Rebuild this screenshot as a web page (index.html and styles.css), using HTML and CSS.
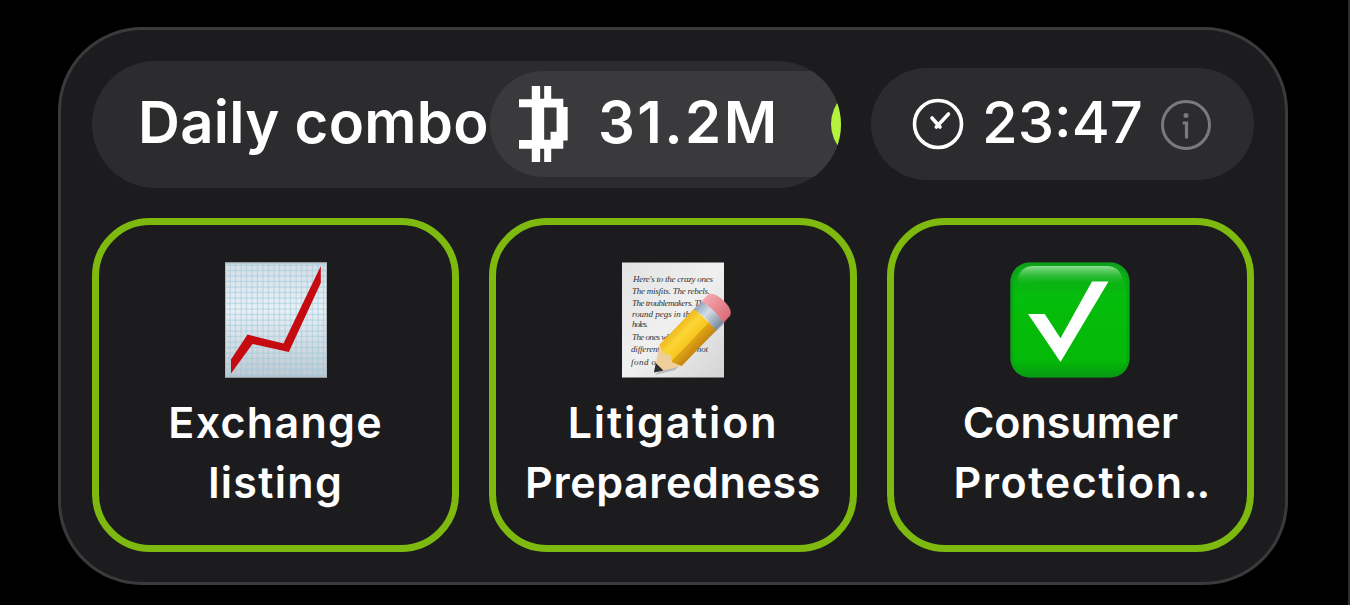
FILE: index.html
```
<!DOCTYPE html>
<html lang="en">
<head>
  <meta charset="UTF-8" />
  <meta name="viewport" content="width=device-width, initial-scale=1.0" />
  <title>Daily combo</title>
  <link rel="stylesheet" href="styles.css">
</head>
<body>
  <div class="panel">
    <div class="header">
      <div class="combo">
        <span class="combo-title">Daily combo</span>
        <div class="reward">
          <svg class="coin" viewBox="118 110 146 226" fill="#fff">
            <path fill-rule="evenodd" d="M156 110h25v38h12v-38h21v38h36v24h13v100h-13v25h-36v39h-21v-39h-12v39h-25v-39h-38v-26h38v-98h-38v-24h38zM193 174v96h19v-24h18v-72z"/>
          </svg>
          <span class="reward-value">31.2M</span>
          <span class="dot"></span>
        </div>
      </div>
      <div class="timer">
        <svg class="clock" viewBox="0 0 52 52" fill="none" stroke="#fff" stroke-linecap="round">
          <circle cx="26" cy="26" r="23.5" stroke-width="3.6"/>
          <path d="M20 20L28 29M36.500 16L24.300 29" stroke-width="3.600"/>
        </svg>
        <span class="timer-value">23:47</span>
        <svg class="info" viewBox="0 0 52 52" fill="none" stroke="#7a7a7c">
          <circle cx="26" cy="26" r="23.5" stroke-width="3"/>
          <circle cx="26" cy="16.500" r="2.500" fill="#7a7a7c" stroke="none"/>
          <path d="M22.700 24H26.500V39.500" stroke-width="3.200"/>
        </svg>
      </div>
    </div>

    <div class="cards">
      <div class="card">
        <svg class="emoji" viewBox="0 0 120 116">
          <defs>
            <linearGradient id="sheet" x1="0" y1="0" x2="0" y2="1">
              <stop offset="0" stop-color="#d5dde5"/>
              <stop offset=".4" stop-color="#eaf0f6"/>
              <stop offset="1" stop-color="#c0c9d2"/>
            </linearGradient>
            <pattern id="grid" width="5.500" height="5.500" patternUnits="userSpaceOnUse">
              <path d="M3 0V6M0 3H6" stroke="#8cc4d8" stroke-width=".8" opacity=".75"/>
            </pattern>
          </defs>
          <rect x="9" y="0.500" width="102" height="115" fill="url(#sheet)"/>
          <rect x="9" y="0.500" width="102" height="115" fill="url(#grid)"/>
          <rect x="9.500" y="1" width="101" height="114" fill="none" stroke="#aeb8c0"/>
          <path d="M15 97.500L31.500 72.500L67.500 81.500L104.800 4V21L72.800 90L36.500 82L15 111.500Z" fill="#c50a10"/>
        </svg>
        <p class="label"><span class="wide">Exchange</span><br><span class="wide">listing</span></p>
      </div>

      <div class="card">
        <svg class="emoji" viewBox="0 0 120 116">
          <defs>
            <linearGradient id="paper" x1="0" y1="0" x2="1" y2="1">
              <stop offset="0" stop-color="#e2e2e2"/>
              <stop offset=".5" stop-color="#f0f0f0"/>
              <stop offset="1" stop-color="#d4d4d4"/>
            </linearGradient>
            <linearGradient id="wood" x1="0" y1="0" x2="0" y2="1">
              <stop offset="0" stop-color="#f0b91c"/>
              <stop offset=".3" stop-color="#fbd536"/>
              <stop offset=".65" stop-color="#f7c61e"/>
              <stop offset=".66" stop-color="#e0a516"/>
              <stop offset="1" stop-color="#c4860f"/>
            </linearGradient>
            <linearGradient id="rubber" x1="0" y1="0" x2="0" y2="1">
              <stop offset="0" stop-color="#f6a9ae"/>
              <stop offset="1" stop-color="#d96b76"/>
            </linearGradient>
            <linearGradient id="metal" x1="0" y1="0" x2="0" y2="1">
              <stop offset="0" stop-color="#93a5b8"/>
              <stop offset=".4" stop-color="#d3dde8"/>
              <stop offset="1" stop-color="#77889a"/>
            </linearGradient>
          </defs>
          <rect x="9" y="0.500" width="102" height="115" fill="url(#paper)"/>
          <g class="writing">
            <text x="20" y="20" textLength="80">Here's to the crazy ones</text>
            <text x="19" y="32" textLength="78">The misfits. The rebels.</text>
            <text x="19" y="44" textLength="75">The troublemakers. The</text>
            <text x="19" y="55" textLength="62">round pegs in the</text>
            <text x="19" y="65" textLength="16">holes.</text>
            <text x="19" y="78" textLength="43">The ones who</text>
            <text x="18" y="90" textLength="77">differently. They're not</text>
            <text x="18" y="103" textLength="28">fond of</text>
          </g>
          <path d="M42 113L62 108L113 60L116 52L108 47Z" fill="#555" opacity=".3"/>
          <g transform="translate(41 110.500) rotate(-46) scale(1 1.180)">
            <path d="M0 0L24 -13V13Z" fill="#efcf99"/>
            <path d="M0 0L8 -4.500V4.500Z" fill="#2b2b2b"/>
            <path d="M24 -13L20 -5L24 0L20 5L24 13H74V-13Z" fill="url(#wood)"/>
            <path d="M73 -13Q77 0 73 13H84Q88 0 84 -13Z" fill="url(#metal)"/>
            <path d="M84 -13H93Q100 -12 100 0T93 13H84Q88 0 84 -13Z" fill="url(#rubber)"/>
          </g>
        </svg>
        <p class="label"><span class="wider">Litigation</span><br><span class="loose">Preparedness</span></p>
      </div>

      <div class="card">
        <svg class="emoji" viewBox="0 0 120 116">
          <defs>
            <linearGradient id="green" x1="0" y1="0" x2="0" y2="1">
              <stop offset="0" stop-color="#10a51d"/>
              <stop offset=".3" stop-color="#05bd0c"/>
              <stop offset=".85" stop-color="#04b907"/>
              <stop offset="1" stop-color="#079a12"/>
            </linearGradient>
            <linearGradient id="gloss" x1="0" y1="0" x2="0" y2="1">
              <stop offset="0" stop-color="#8fdf94"/>
              <stop offset="1" stop-color="#12bb1c" stop-opacity="0"/>
            </linearGradient>
          </defs>
          <rect x="0.500" y="0.500" width="119" height="115" rx="19" fill="url(#green)"/>
          <rect x="2" y="2" width="116" height="112" rx="18" fill="none" stroke="#0b9c18" stroke-width="3" opacity=".5"/>
          <path d="M7 24Q7 4 24 4H96Q113 4 113 24Q106 20 90 20H30Q14 20 7 24Z" fill="url(#gloss)"/>
          <path d="M18 52H34.700L50.500 76.300L82 19.500H98.500L50.500 100Z" fill="#fff"/>
        </svg>
        <p class="label">Consumer<br><span class="clipped">Protection<span class="dots">..</span></span></p>
      </div>
    </div>
  </div>
</body>
</html>
```
FILE: styles.css
```
* {
  box-sizing: border-box;
}

body {
  margin: 0;
  height: 605px;
  padding: 27px 60px 0 58px;
  background: #000;
  border-right: 2px solid #2c2c28;
  color: #fff;
  font-family: Inter, "Liberation Sans", sans-serif;
  overflow: hidden;
}

.panel {
  width: 1230px;
  height: 558px;
  padding: 30.5px 31px;
  background: #1c1c1e;
  border: 3px solid #3a3a3c;
  border-radius: 84px;
}

.header {
  display: flex;
  align-items: center;
  gap: 30px;
}

.combo {
  display: flex;
  align-items: center;
  width: 749px;
  height: 127px;
  padding-left: 46px;
  background: #2c2c2e;
  border-radius: 64px;
  overflow: hidden;
  font-size: 58px;
  font-weight: 600;
  line-height: 70px;
  white-space: nowrap;
}

.combo-title {
  flex: none;
  width: 352px;
  padding-bottom: 5px;
  letter-spacing: 0.3px;
}

.reward {
  display: flex;
  align-items: center;
  flex: none;
  width: 440px;
  height: 106px;
  padding-left: 29px;
  background: #3a3a3c;
  border-radius: 53px;
}

.coin {
  flex: none;
  width: 49px;
  height: 76px;
}

.reward-value {
  width: 234px;
  padding: 0 0 5px 30px;
  letter-spacing: 2.4px;
}

.dot {
  flex: none;
  width: 76px;
  height: 76px;
  margin-left: 29px;
  background: #b5f23d;
  border-radius: 50%;
}

.timer {
  display: flex;
  align-items: center;
  width: 383px;
  height: 112px;
  padding-left: 41px;
  background: #2c2c2e;
  border-radius: 56px;
  font-size: 58px;
  font-weight: 500;
  line-height: 70px;
}

.clock, .info {
  flex: none;
  width: 52px;
  height: 52px;
}

.timer-value {
  width: 196px;
  padding: 0 0 4px 18px;
}

.info {
  margin-top: 2px;
}

.cards {
  display: flex;
  gap: 30px;
  margin-top: 30px;
}

.card {
  display: flex;
  flex-direction: column;
  align-items: center;
  flex: 1;
  height: 334px;
  padding-top: 37.5px;
  border: 7.5px solid #7db90f;
  border-radius: 58px;
}

.emoji {
  width: 120px;
  height: 116px;
}

.label {
  margin: 14px 0 0;
  font-size: 43px;
  font-weight: 600;
  line-height: 60px;
  text-align: center;
  white-space: nowrap;
}

.loose {
  letter-spacing: 0.6px;
}

.wide {
  letter-spacing: 1.3px;
}

.wider {
  letter-spacing: 1.8px;
}

/* the cut-off name sits a little right of centre */
.clipped {
  padding-left: 22px;
  letter-spacing: 1.6px;
}

.dots {
  letter-spacing: -1px;
}

.writing {
  fill: #333;
  font-family: "Liberation Serif", serif;
  font-size: 9px;
  font-style: italic;
}
```
